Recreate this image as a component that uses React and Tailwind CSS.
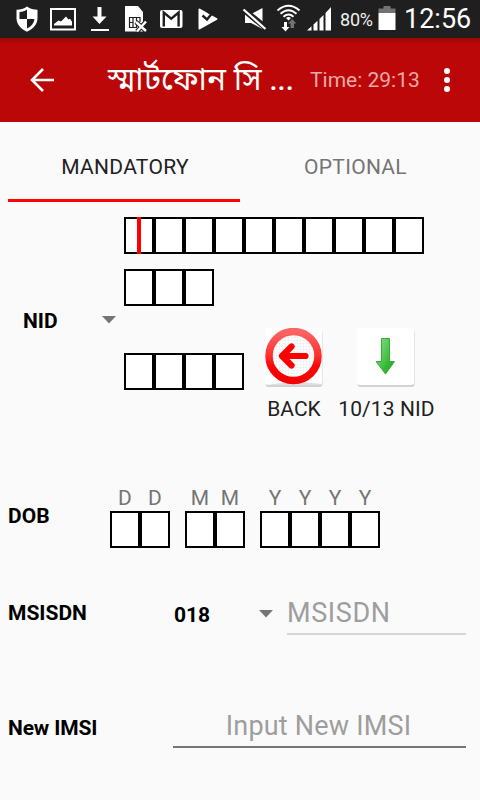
import React from "react";

function Boxes({ count, cursor }) {
  return (
    <div className="flex">
      {Array.from({ length: count }, (_, i) => (
        <div key={i} className="relative w-[30px] h-[37px] bg-white border-2 border-black">
          {cursor && i === 0 && <span className="absolute left-[11px] -top-[2px] w-1 h-[37px] bg-[#ff0000]" />}
        </div>
      ))}
    </div>
  );
}

function DateGroup({ letters }) {
  return (
    <div>
      <div className="flex text-[21px] leading-[26px] text-[#757575]">
        {letters.split("").map((l, i) => (
          <span key={i} className="w-[30px] text-center">{l}</span>
        ))}
      </div>
      <Boxes count={letters.length} />
    </div>
  );
}

function Caret() {
  return (
    <svg width="14" height="8" viewBox="0 0 14 8" className="shrink-0">
      <path d="M0 0h14L7 7.6z" fill="#757575" />
    </svg>
  );
}

function StatusBar() {
  return (
    <div className="h-[38px] bg-[#1f1f1f] text-white">
      <div className="flex h-[38px]">
        <svg width="340" height="38" viewBox="0 0 340 38" fill="#fff" className="shrink-0">
          {/* shield */}
          <path d="M27 6.5c3 2.300 6.500 3.300 10.500 3.300v8.200c0 6-4 10.800-10.500 13.700-6.500-2.900-10.500-7.700-10.500-13.700V9.800c4 0 7.500-1 10.500-3.300z" />
          <path d="M27 9.500v9.500h-7.500v-7c3-.2 5.500-1 7.500-2.500zM27 19h7.500c-.5 4-3 7.300-7.500 9.500z" fill="#1f1f1f" />
          {/* picture */}
          <path d="M50 8h26v22.500H50zm2 2v18.500h22V10z" fillRule="evenodd" />
          <path d="M54 25.500v-1.500l4.500-3.500 2.500 1 5-5 2.500 3 1.500-.8 2 3v3.800z" />
          {/* download */}
          <path d="M97.500 7h4v9.500h5L99.500 24l-7-7.500h5zM91 29h18v2H91z" />
          {/* sim card */}
          <path d="M125 6h13l5 6v19.500h-18z" />
          <path d="M129 17.500h11M129 27.500h8M129.500 17v11M133 17v11M136.500 17v11M140 17v5M133 22.500h-3.500M136.500 22.500h3" stroke="#1f1f1f" strokeWidth="1.200" />
          <path d="M136 22l10 9M146 21.500l-9 10" stroke="#1f1f1f" strokeWidth="4.500" />
          <path d="M136 22l10 9M146 21.500l-9 10" stroke="#fff" strokeWidth="2.400" />
          {/* mail */}
          <rect x="160" y="10" width="22.500" height="18" rx="2" />
          <path d="M163.800 26.500V12.500l7.400 6.200 7.400-6.200v14" fill="none" stroke="#1f1f1f" strokeWidth="2.400" />
          {/* play protect */}
          <path d="M199.500 9.500L216.500 19l-17 9.500z" stroke="#fff" strokeWidth="2" strokeLinejoin="round" />
          <path d="M208 13l7.500-7" stroke="#1f1f1f" strokeWidth="3" />
          <path d="M202.500 15.500l4.500 4 6.500-8" fill="none" stroke="#1f1f1f" strokeWidth="2.400" />
          {/* muted speaker */}
          <path d="M245 14h6l11.500-6v21l-11.500-6h-6z" />
          <path d="M244 10l22 18" stroke="#1f1f1f" strokeWidth="6" />
          <path d="M243.500 9.500l22 19.500" stroke="#fff" strokeWidth="2.200" />
          {/* wifi */}
          <g fill="none" stroke="#fff" strokeWidth="2">
            <path d="M277.500 10.500q11-9.500 22 0M280.500 13.700q8-7 16 0M283.500 16.700q5-4.300 10 0" />
          </g>
          <path d="M286 18q2.500-2 5 0l-2.500 2.500z" />
          <path d="M284 22h3v5h2.500l-4 4.500-4-4.500h2.500z" />
          <path d="M290.500 28v-4.500H288l4.200-4.500 4.200 4.500H294V28z" fill="#737373" />
          {/* signal */}
          <path d="M307 30.500l4.500-4.300v4.300zM313.500 24.500l4-3.800v9.800h-4zM319.500 19l4-4v15.500h-4zM325.500 13l5.500-6v23.500h-5.500z" />
        </svg>
        <span className="w-[38px] text-[18px] leading-[39px] tracking-[-0.2px] text-[#f0f0f0]">80%</span>
        <svg width="18" height="38" viewBox="0 0 18 38" className="shrink-0">
          <path d="M0.500 8.500h5v-2.500h7v2.500h5V13H0.500z" fill="#737373" />
          <path d="M0.500 13h17v17H0.500z" fill="#fff" />
        </svg>
        <span className="ml-2 whitespace-nowrap text-[27px] leading-[39px]">12:56</span>
      </div>
    </div>
  );
}

function AppBar() {
  return (
    <div className="flex items-center h-[84px] bg-[#bb0707] bg-[linear-gradient(#9e0606,#bb0707_7px)] text-white">
      <svg width="24" height="24" viewBox="0 0 24 24" className="ml-[30px] shrink-0" fill="none" stroke="#fff" strokeWidth="2.600">
        <path d="M24 12H2M13 1L2 12l11 11" />
      </svg>
      <h1 className="ml-[54px] w-[202px] whitespace-nowrap text-[31.5px] leading-[40px] font-normal">
        স্মার্টফোন সি <span className="text-[29px] font-medium">...</span>
      </h1>
      <span className="w-[133px] text-[21px] leading-[26px] text-[#eba9a9]">Time: 29:13</span>
      <svg width="8" height="26" viewBox="0 0 8 26" fill="#fff">
        <circle cx="4" cy="4" r="3" />
        <circle cx="4" cy="13" r="3" />
        <circle cx="4" cy="22" r="3" />
      </svg>
    </div>
  );
}

function BackIcon() {
  return (
    <svg width="60" height="60" viewBox="0 0 60 60">
      <defs>
        <linearGradient id="ring" x1="0" y1="0" x2="0" y2="1">
          <stop offset="0" stopColor="#ff6464" />
          <stop offset="0.500" stopColor="#fb3030" />
          <stop offset="0.700" stopColor="#fa0808" />
          <stop offset="1" stopColor="#f40000" />
        </linearGradient>
        <pattern id="grid" width="3" height="3" patternUnits="userSpaceOnUse">
          <path d="M0 0h3M0 0v3" stroke="#ececec" strokeWidth="1" />
        </pattern>
      </defs>
      <rect x="1.500" y="2" width="57" height="57" rx="3" fill="#d2d2d2" />
      <rect x="1" y="0" width="57" height="57" rx="3" fill="#fff" />
      <path d="M2 57q27-5 56-1v1z" fill="#dedede" />
      <circle cx="29.500" cy="28" r="24.500" fill="#fff" />
      <circle cx="29.500" cy="28" r="24.500" fill="url(#grid)" />
      <circle cx="29.500" cy="28" r="24.500" fill="none" stroke="url(#ring)" strokeWidth="7.500" />
      <path d="M41.500 28H20M27.500 18.500L18 28l9.500 9.500" fill="none" stroke="#f00" strokeWidth="6.200" strokeLinecap="round" strokeLinejoin="round" />
    </svg>
  );
}

function DownIcon() {
  return (
    <svg width="60" height="60" viewBox="0 0 60 60">
      <defs>
        <linearGradient id="green" x1="0" y1="0" x2="1" y2="1">
          <stop offset="0" stopColor="#8ee08e" />
          <stop offset="0.500" stopColor="#4cc44c" />
          <stop offset="1" stopColor="#0fa015" />
        </linearGradient>
      </defs>
      <rect x="1.500" y="2" width="57" height="57" rx="3" fill="#d2d2d2" />
      <rect x="1" y="0" width="57" height="57" rx="3" fill="#fff" />
      <path d="M25.500 10.500h8v23h5L29.500 46 20 33.500h5.500z" fill="url(#green)" stroke="#35ad38" strokeWidth="1" />
    </svg>
  );
}

export default function App() {
  return (
    <div className="w-[480px] h-[800px] overflow-hidden bg-[#fafafa] text-[#212121] font-['Roboto','Noto_Sans_Bengali',sans-serif]">
      <StatusBar />
      <AppBar />

      <div className="flex px-2 h-20 text-[21px] leading-[90px] tracking-[0.3px] text-center">
        <div className="w-[232px] border-b-[3px] border-[#ff0000] pl-[2px]">MANDATORY</div>
        <div className="w-[232px] pr-[1px] text-[#757575]">OPTIONAL</div>
      </div>

      <div className="flex pt-[15px] h-[283px]">
        <div className="flex justify-between w-[116px] pl-[23px] pt-[91px] h-[119px]">
          <span className="text-[21px] leading-[26px] font-bold text-black">NID</span>
          <div className="pt-[8px] flex"><Caret /></div>
        </div>
        <div className="ml-2">
          <Boxes count={10} cursor />
          <div className="mt-[15px]">
            <Boxes count={3} />
          </div>
          <div className="flex mt-[22px]">
            <div className="pt-[25px] w-[120px]">
              <Boxes count={4} />
            </div>
            <div className="flex flex-col items-center ml-5 w-[60px] text-[21px] leading-[26px]">
              <BackIcon />
              <span className="mt-[8px]">BACK</span>
            </div>
            <div className="flex flex-col items-center ml-[12px] w-[100px] text-[21px] leading-[26px] tracking-[0.1px] whitespace-nowrap">
              <DownIcon />
              <span className="mt-[8px] pl-[1px]">10/13 NID</span>
            </div>
          </div>
        </div>
      </div>

      <div className="flex pl-2 h-[100px]">
        <span className="w-[102px] pt-[18px] text-[21px] leading-[26px] font-bold text-black">DOB</span>
        <div className="flex gap-[15px]">
          <DateGroup letters="DD" />
          <DateGroup letters="MM" />
          <DateGroup letters="YYYY" />
        </div>
      </div>

      <div className="flex pl-2 pt-[15px] h-[115px] text-[21px] leading-[26px]">
        <span className="w-[166px] font-bold text-black">MSISDN</span>
        <span className="w-[85px] pt-[2px] font-bold text-black">018</span>
        <div className="pt-[10px]"><Caret /></div>
        <div className="ml-[14px] -mt-[5px] w-[179px] h-[40px] border-b-2 border-[#d5d5d5] text-[27px] leading-[36px] tracking-[0.6px] text-[#9e9e9e]">
          MSISDN
        </div>
      </div>

      <div className="flex pl-2 pt-[15px] text-[21px] leading-[26px]">
        <span className="w-[165px] font-bold tracking-[-0.15px] text-black">New IMSI</span>
        <div className="-mt-[7px] w-[293px] h-[40px] border-b-2 border-[#757575] text-[27px] leading-[36px] tracking-[0.2px] text-center text-[#9e9e9e]">
          <span className="pr-[2px]">Input New IMSI</span>
        </div>
      </div>
    </div>
  );
}
